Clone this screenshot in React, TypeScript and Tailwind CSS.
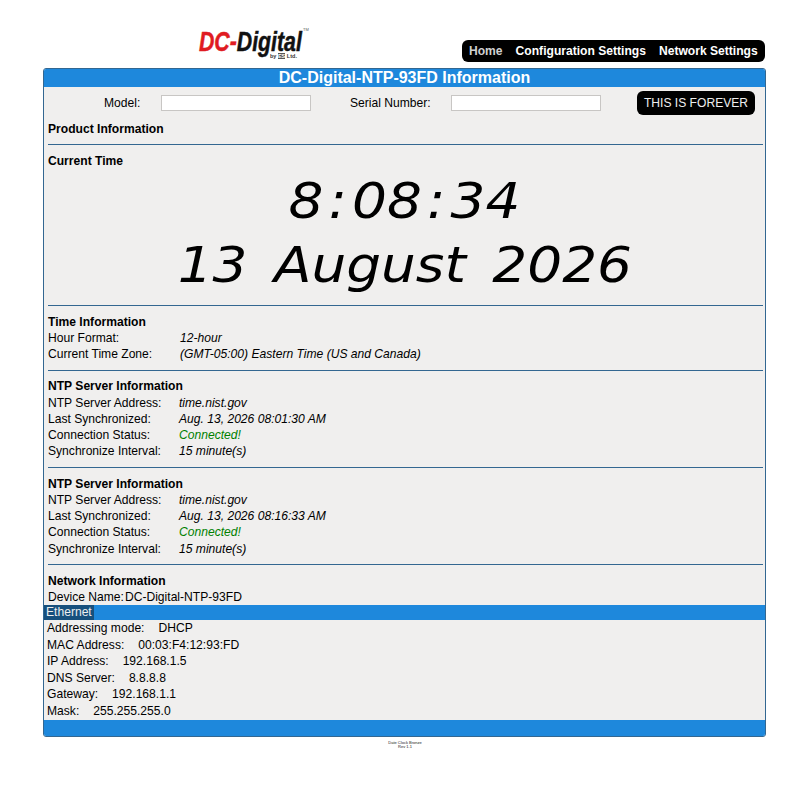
const Divider = () => <div className="mr-[2px] ml-[4px] h-px bg-[#336791]" />;

function InfoRow({ label, value, width, valueClass = "" }: { label: string; value: string; width: string; valueClass?: string }) {
	return (
		<div className="flex h-[16.25px] items-center">
			<span className={width}>{label}</span>
			<span className={`italic ${valueClass}`}>{value}</span>
		</div>
	);
}

function NtpBlock({ lastSync }: { lastSync: string }) {
	return (
		<div className="px-[4px] pt-[7.5px] pb-[7.5px]">
			<div className="flex h-[16.25px] items-center font-bold">NTP Server Information</div>
			<InfoRow label="NTP Server Address:" value="time.nist.gov" width="w-[131px]" />
			<InfoRow label="Last Synchronized:" value={lastSync} width="w-[131px]" />
			<InfoRow label="Connection Status:" value="Connected!" width="w-[131px]" valueClass="text-[#008000]" />
			<InfoRow label="Synchronize Interval:" value="15 minute(s)" width="w-[131px]" />
		</div>
	);
}

function EthRow({ label, value }: { label: string; value: string }) {
	return (
		<div className="flex h-[16.6px] items-center gap-[14px] pl-[3px]">
			<span>{label}</span>
			<span>{value}</span>
		</div>
	);
}

export default function App() {
	return (
		<div className="h-[786px] w-[800px] overflow-hidden bg-white font-['Liberation_Sans',Arial,sans-serif] text-[12.1px] text-black">
			<header className="flex h-[68px] items-start pl-[199px]">
				<div className="relative mt-[30px] w-[112px]">
					<div className="h-[23px] origin-left scale-x-[0.76] text-[28px] leading-[24px] font-bold whitespace-nowrap italic [-webkit-text-stroke:0.5px_currentColor]">
						<span className="text-[#e01b22]">DC-</span>
						<span className="text-[#111]">Digital</span>
					</div>
					<div className="pl-[71px] text-[5.5px] leading-[6px] font-bold whitespace-nowrap text-[#333]">
						by <span className="bg-[#555] text-white">ES</span> Ltd.
					</div>
					<div className="absolute top-[-2px] left-[104px] text-[4px] leading-[4px] text-[#555]">TM</div>
				</div>
				<nav className="mt-[40px] ml-[151px] flex h-[22px] w-[303px] items-center rounded-[6px] bg-black pl-[7px] font-bold text-white">
					<span className="text-[#d0d0d0]">Home</span>
					<span className="ml-[13px]">Configuration Settings</span>
					<span className="ml-[13px]">Network Settings</span>
				</nav>
			</header>

			<main className="mx-[43px] h-[669px] w-[723px] overflow-hidden rounded-[3px] border border-[#336791] bg-[#f0efee]">
				<h1 className="flex h-[18px] items-center justify-center bg-[#1e88dc] text-[16px] font-bold text-white">
					DC-Digital-NTP-93FD Information
				</h1>
				<div className="flex h-[32px] items-center">
					<span className="ml-[60px] w-[57px]">Model:</span>
					<input className="h-[16px] w-[150px] border border-[#c8c6c4] bg-white" />
					<span className="ml-[39px] w-[101px]">Serial Number:</span>
					<input className="h-[16px] w-[150px] border border-[#c8c6c4] bg-white" />
					<div className="ml-[36px] flex h-[24px] w-[118px] items-center justify-center rounded-[6px] bg-black text-[#eee]">THIS IS FOREVER</div>
				</div>
				<div className="h-[25px] px-[4px] pt-[1.5px] leading-[16px] font-bold">Product Information</div>
				<Divider />
				<div className="px-[4px] pt-[7.5px] leading-[16px] font-bold">Current Time</div>
				<div className="pt-[1.5px] text-center font-['DejaVu_Sans',sans-serif] text-[49px] leading-[64px] italic">
					<div className="inline-block scale-x-[1.12]">
						8<span className="mx-[4.5px]">:</span>08<span className="mx-[4.5px]">:</span>34
					</div>
					<div>
						<span className="inline-block scale-x-[1.12] [word-spacing:8px]">13 August 2026</span>
					</div>
				</div>
				<div className="h-[7px]" />
				<Divider />
				<div className="px-[4px] pt-[7.5px] pb-[7.5px]">
					<div className="flex h-[16.25px] items-center font-bold">Time Information</div>
					<InfoRow label="Hour Format:" value="12-hour" width="w-[132px]" />
					<InfoRow label="Current Time Zone:" value="(GMT-05:00) Eastern Time (US and Canada)" width="w-[132px]" />
				</div>
				<Divider />
				<NtpBlock lastSync="Aug. 13, 2026 08:01:30 AM" />
				<Divider />
				<NtpBlock lastSync="Aug. 13, 2026 08:16:33 AM" />
				<Divider />
				<div className="px-[4px] pt-[7.5px]">
					<div className="flex h-[16.25px] items-center font-bold">Network Information</div>
					<div className="flex h-[15.75px] items-center gap-[1px]">
						<span>Device Name:</span>
						<span>DC-Digital-NTP-93FD</span>
					</div>
				</div>
				<div className="flex h-[15px] bg-[#1e88dc]">
					<span className="flex items-center bg-[#17507d] px-[2px] text-[#eee]">Ethernet</span>
				</div>
				<div>
					<EthRow label="Addressing mode:" value="DHCP" />
					<EthRow label="MAC Address:" value="00:03:F4:12:93:FD" />
					<EthRow label="IP Address:" value="192.168.1.5" />
					<EthRow label="DNS Server:" value="8.8.8.8" />
					<EthRow label="Gateway:" value="192.168.1.1" />
					<EthRow label="Mask:" value="255.255.255.0" />
				</div>
				<div className="mt-[1px] h-[20px] bg-[#1e88dc]" />
			</main>

			<footer className="mt-[4px] pl-[10px] text-center text-[4px] leading-[4px] text-[#222]">
				<div>Date Clock Bronze</div>
				<div>Rev 1.1</div>
			</footer>
		</div>
	);
}
